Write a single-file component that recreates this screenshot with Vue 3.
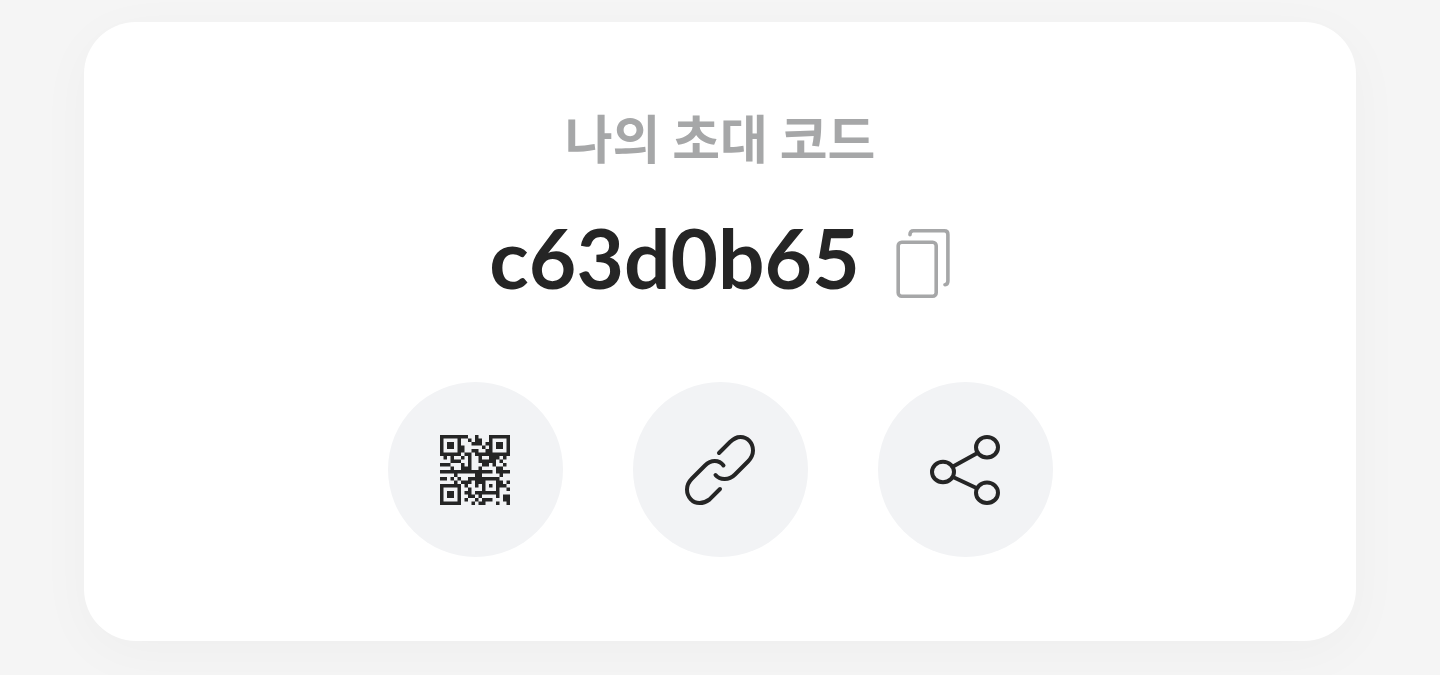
<script setup>
const code = 'c63d0b65'
const modules = [
  '11111111001000111111',
  '10000100101100100001',
  '10110100011101101101',
  '10110110000010101101',
  '10000110011001100001',
  '11111101101111111111',
  '01010010100100111010',
  '00011100100111110100',
  '11100010100011010010',
  '00010011100100001100',
  '11111111111111101111',
  '00001000001100000100',
  '11010100111111111000',
  '00001011101110001101',
  '11111101001010101110',
  '10000100100010001001',
  '10110101101111111000',
  '10110100110100001011',
  '10000101001011100011',
  '11111100010110001001',
]
const qrPath = modules
  .map((row, y) => [...row].map((m, x) => (m === '1' ? `M${x} ${y}h1v1h-1z` : '')).join(''))
  .join('')
const copyCode = () => navigator.clipboard?.writeText(code)
</script>

<template>
  <main class="page">
    <section class="card">
      <h1 class="title">나의 초대 코드</h1>
      <div class="code-row">
        <span class="code">{{ code }}</span>
        <button class="copy" type="button" aria-label="코드 복사" @click="copyCode">
          <svg width="56" height="70" viewBox="0 0 56 70" fill="none" stroke="#a6a7a8" stroke-width="3.6" stroke-linecap="round">
            <rect x="3.2" y="13.2" width="38" height="54" rx="3.5" />
            <path d="M15 5.700V5.200Q15 1.800 18.400 1.800H49.300Q52.900 1.800 52.900 5.400V52.100Q52.900 55.500 50 55.700" />
          </svg>
        </button>
      </div>
      <div class="actions">
        <button class="action" type="button" aria-label="QR 코드">
          <svg width="70" height="70" viewBox="0 0 20 20" fill="#252525"><path :d="qrPath" /></svg>
        </button>
        <button class="action" type="button" aria-label="링크 복사">
          <svg width="70" height="70" viewBox="0 0 70 70" fill="none" stroke="#252525" stroke-width="4" stroke-linecap="round">
            <path d="M34 18L45 7C49 3.500 51 2 55.500 2C62.500 2 68 8 68 15.500C68 20 66.500 23 63 26.500L50 39.500C44 45.500 35 45.500 30.500 40" />
            <path d="M35 54L24.500 64.500C21 67 19 68 14.500 68C7.500 68 2 62 2 54.500C2 50 3.500 47 7 43.500L20 30.500C26 24.500 34 24.500 38.500 30.500" />
          </svg>
        </button>
        <button class="action" type="button" aria-label="공유">
          <svg width="70" height="70" viewBox="0 0 70 70" fill="none" stroke="#252525" stroke-width="4">
            <ellipse cx="13" cy="37" rx="11" ry="10.300" />
            <ellipse cx="57" cy="12.300" rx="11" ry="10.300" />
            <ellipse cx="57" cy="57.700" rx="11" ry="10.300" />
            <path d="M23 31.500L47.500 18M23 42L47.500 53.500" />
          </svg>
        </button>
      </div>
    </section>
  </main>
</template>

<style>
body {
  margin: 0;
  background: #f5f5f5;
}
</style>

<style scoped>
.page {
  padding: 22px 84px 34px;
}
.card {
  display: flex;
  flex-direction: column;
  align-items: center;
  padding: 77px 24px 84px;
  border-radius: 52px;
  background: #fff;
  box-shadow: 0 12px 56px rgba(0, 0, 0, 0.03);
}
.title {
  margin: 0;
  color: #a6a7a8;
  font: 700 52px/76px "Noto Sans CJK KR", sans-serif;
}
.code-row {
  display: flex;
  align-items: flex-end;
  gap: 35px;
  margin-top: 40px;
}
.code {
  color: #252525;
  font: 700 82px/84px Lato, sans-serif;
}
.copy {
  padding: 0;
  border: 0;
  background: none;
  cursor: pointer;
}
.copy svg,
.action svg {
  display: block;
}
.actions {
  display: flex;
  gap: 70px;
  margin-top: 83px;
}
.action {
  display: grid;
  place-items: center;
  width: 175px;
  height: 175px;
  padding: 0;
  border: 0;
  border-radius: 50%;
  background: #f2f3f5;
  cursor: pointer;
}
</style>
